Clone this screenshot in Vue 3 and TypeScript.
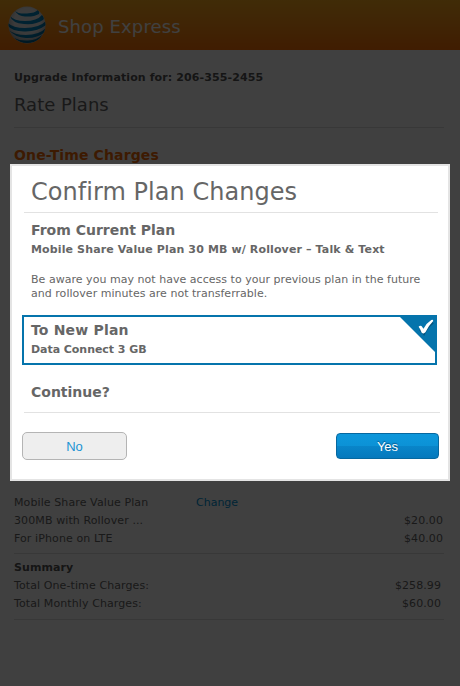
<script setup lang="ts">
interface Row {
  label: string
  amount?: string
  link?: string
}

const planRows: Row[] = [
  { label: 'Mobile Share Value Plan', link: 'Change' },
  { label: '300MB with Rollover ...', amount: '$20.00' },
  { label: 'For iPhone on LTE', amount: '$40.00' },
]

const summaryRows: Row[] = [
  { label: 'Total One-time Charges:', amount: '$258.99' },
  { label: 'Total Monthly Charges:', amount: '$60.00' },
]
</script>

<template>
  <div class="page">
    <header class="topbar">
      <svg class="globe" width="38" height="38" viewBox="0 0 38 38">
        <defs>
          <clipPath id="ball"><circle cx="19" cy="19" r="18.5" /></clipPath>
          <radialGradient id="shade" cx="50%" cy="40%" r="60%">
            <stop offset="0.55" stop-color="#000" stop-opacity="0" />
            <stop offset="1" stop-color="#000" stop-opacity="0.35" />
          </radialGradient>
        </defs>
        <g clip-path="url(#ball)">
          <rect width="38" height="38" fill="#ececec" />
          <g fill="#0088c4">
            <path d="M7 5 Q10 8 19 7.5 Q27 7 30 4 Q32 6 31 8 Q26 11 17 10.5 Q10 10 7 5Z" />
            <path d="M2 10 Q6 15 17 15 Q29 15 34 9 Q37 12 35 14 Q28 19 16 18 Q4 17 2 10Z" />
            <path d="M0 17 Q5 22 17 22 Q31 22 38 15 L38 19 Q29 26 16 25.5 Q4 25 0 20Z" />
            <path d="M1 24 Q6 29 18 29 Q31 29 38 22 L37 26 Q29 32.500 18 32 Q7 31.500 1 24Z" />
            <path d="M6 32 Q12 35 20 34.500 Q29 34 34 29 L32 33 Q26 37 19 37 Q12 37 6 32Z" />
          </g>
          <rect width="38" height="38" fill="url(#shade)" />
        </g>
      </svg>
      <span class="brand">Shop Express</span>
    </header>

    <main class="content">
      <p class="account">Upgrade Information for: 206-355-2455</p>
      <h1 class="heading">Rate Plans</h1>
      <section class="charges">
        <h2 class="charges-title">One-Time Charges</h2>
      </section>
      <section class="plan">
        <div v-for="row in planRows" :key="row.label" class="row">
          <span class="label">{{ row.label }}</span>
          <a v-if="row.link" class="change">{{ row.link }}</a>
          <span class="amount">{{ row.amount }}</span>
        </div>
      </section>
      <section class="summary">
        <h3 class="row total">Summary</h3>
        <div v-for="row in summaryRows" :key="row.label" class="row">
          <span class="label">{{ row.label }}</span>
          <span class="amount">{{ row.amount }}</span>
        </div>
      </section>
    </main>

    <div class="overlay">
      <div class="dialog">
        <h2 class="title">Confirm Plan Changes</h2>
        <section class="current">
          <h3 class="sub from">From Current Plan</h3>
          <p class="plan-name current-name">Mobile Share Value Plan 30 MB w/ Rollover – Talk &amp; Text</p>
          <p class="notice">
            <span>Be aware you may not have access to your previous plan in the future</span><br />
            <span>and rollover minutes are not transferrable.</span>
          </p>
        </section>
        <section class="selected">
          <h3 class="sub to">To New Plan</h3>
          <p class="plan-name new-name">Data Connect 3 GB</p>
          <svg class="corner" width="37" height="37" viewBox="0 0 37 37">
            <path d="M0 0H37V37Z" fill="#0574ac" />
            <path d="M20.500 12.500 L24 16.500 Q27 10 33 5.500" transform="translate(.8 .8)" fill="none" stroke="#045580" stroke-width="3" />
            <path d="M19.600 10.800 Q20.800 9 22.500 10 L24.500 12.700 Q27.500 7 32.300 4 Q34.200 3.300 34.200 5 Q29.300 10 26.400 16.300 Q24.500 18.300 22.700 16.700 Q21.300 13 19.600 10.800Z" fill="#fff" />
          </svg>
        </section>
        <h3 class="sub continue">Continue?</h3>
        <div class="actions">
          <button class="btn no" type="button">No</button>
          <button class="btn yes" type="button">Yes</button>
        </div>
      </div>
    </div>
  </div>
</template>

<style>
body {
  margin: 0;
  background: #fff;
}
</style>

<style scoped>
.page {
  position: relative;
  box-sizing: border-box;
  height: 686px;
  overflow: hidden;
  background: #fff;
  color: #666;
  font: 11px/18px 'DejaVu Sans', Verdana, sans-serif;
  white-space: nowrap;
}

h1,
h2,
h3,
p {
  margin: 0;
}

.topbar {
  display: flex;
  align-items: center;
  box-sizing: border-box;
  height: 50px;
  padding-left: 8px;
  gap: 12px;
  background: linear-gradient(#ffae20, #ff7208);
}

.globe {
  display: block;
}

.brand {
  color: #fff;
  font-size: 18px;
  line-height: 26px;
  padding-top: 3px;
  letter-spacing: 0.12px;
}

.content {
  padding: 19px 16px 0 14px;
  color: #666;
}

.account {
  font-weight: bold;
  color: #555;
  letter-spacing: 0.11px;
}

.heading {
  height: 40px;
  line-height: 35px;
  font-size: 18px;
  font-weight: normal;
  border-bottom: 1px solid #ddd;
}

.charges {
  height: 366px;
  padding-top: 17px;
  box-sizing: border-box;
}

.charges-title {
  font-size: 14px;
  line-height: 20px;
  letter-spacing: 0.13px;
  color: #f26a05;
}

.row {
  display: flex;
  height: 18px;
  line-height: 18px;
  font-size: 11px;
}

.label {
  width: 182px;
  letter-spacing: 0.1px;
}

.change {
  color: #0092d6;
}

.amount {
  margin-left: auto;
  padding-right: 1px;
  letter-spacing: 0.08px;
}

.plan {
  height: 59px;
  border-bottom: 1px solid #ddd;
}

.summary {
  padding-top: 5px;
  height: 60px;
  border-bottom: 1px solid #ddd;
}

.summary .amount {
  padding-right: 3px;
}

.total {
  color: #555;
  letter-spacing: 0.1px;
}

.overlay {
  position: absolute;
  inset: 0;
  padding: 164px 10px 0;
  background: rgba(0, 0, 0, 0.75);
}

.dialog {
  box-sizing: border-box;
  height: 317px;
  padding: 9px 9px 0 10px;
  border: 2px solid #e4e4e4;
  background: #fff;
}

.title {
  height: 37px;
  margin: 0 1px 0 2px;
  padding-left: 7px;
  border-bottom: 1px solid #e2e2e2;
  font-size: 24px;
  font-weight: normal;
  line-height: 34px;
  letter-spacing: 0.04px;
}

.current {
  height: 102px;
  padding-left: 9px;
}

.sub {
  font-size: 14px;
  line-height: 20px;
}

.from {
  padding-top: 7px;
}

.plan-name {
  padding-top: 1px;
  font-weight: bold;
}

.current-name {
  letter-spacing: 0.13px;
}

.new-name {
  letter-spacing: -0.05px;
}

.to {
  letter-spacing: 0.18px;
}

.notice {
  margin-top: 14px;
  line-height: 14px;
  letter-spacing: 0.03px;
}

.selected {
  position: relative;
  box-sizing: border-box;
  width: 415px;
  height: 50px;
  padding: 3px 7px 0;
  border: 2px solid #0574ac;
}

.corner {
  position: absolute;
  top: -1px;
  right: -1px;
}

.continue {
  height: 30px;
  margin: 17px -1px 0 2px;
  padding-left: 7px;
  border-bottom: 1px solid #e2e2e2;
}

.actions {
  display: flex;
  justify-content: space-between;
  align-items: center;
  padding-top: 19px;
}

.btn {
  box-sizing: border-box;
  padding: 1px 0 0;
  font: 13px/16px 'Liberation Sans', Arial, sans-serif;
  border-radius: 5px;
}

.no {
  width: 105px;
  height: 28px;
  border: 1px solid #b4b4b4;
  background: #eee;
  color: #1b94d4;
}

.yes {
  width: 103px;
  height: 26px;
  border: 1px solid #0668a0;
  border-radius: 4px;
  background: linear-gradient(#0d97db 0, #0c92d6 50%, #0985c9 50%, #0579bd 100%);
  color: #fff;
  text-shadow: 0 -1px 1px rgba(0, 40, 80, 0.6);
}
</style>
